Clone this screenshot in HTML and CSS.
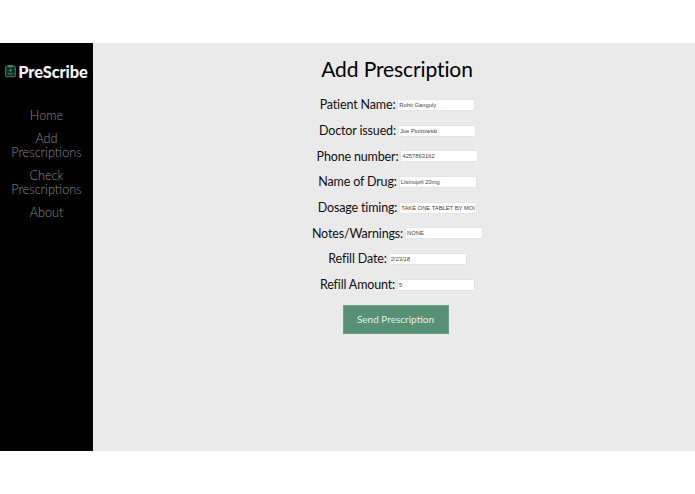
FILE: index.html
```html
<!DOCTYPE html>
<html lang="en">
<head>
<meta charset="utf-8">
<title>PreScribe</title>
<link rel="stylesheet" href="styles.css">
</head>
<body>
<div class="app">
  <aside class="sidebar">
    <div class="brand">
      <svg class="logo" viewBox="0 0 12 14" aria-hidden="true">
        <rect x="0.7" y="1.7" width="10.6" height="11.6" rx="1" fill="#12301f" stroke="#4a8a68" stroke-width="1"/>
        <rect x="3.5" y="0.5" width="5" height="2.4" fill="#4a8a68"/>
        <path d="M6 4.5v3.5M4.2 6.2h3.6M3.2 10h5.6" stroke="#4a8a68" stroke-width="1" fill="none"/>
      </svg>
      <span class="brand-name">PreScribe</span>
    </div>
    <nav class="nav">
      <a class="nav-item">Home</a>
      <a class="nav-item">Add Prescriptions</a>
      <a class="nav-item">Check Prescriptions</a>
      <a class="nav-item">About</a>
    </nav>
  </aside>
  <main class="content">
    <h1 class="title">Add Prescription</h1>
    <form class="form">
      <div class="row"><label>Patient Name:</label><input value="Rohit Ganguly"></div>
      <div class="row"><label>Doctor issued:</label><input value="Joe Piotrowski"></div>
      <div class="row"><label>Phone number:</label><input value="4257863162"></div>
      <div class="row"><label>Name of Drug:</label><input value="Lisinopril 20mg"></div>
      <div class="row"><label>Dosage timing:</label><input value="TAKE ONE TABLET BY MOUTH DAILY"></div>
      <div class="row"><label>Notes/Warnings:</label><input value="NONE"></div>
      <div class="row"><label>Refill Date:</label><input value="2/23/18"></div>
      <div class="row"><label>Refill Amount:</label><input value="5"></div>
      <button class="send" type="button">Send Prescription</button>
    </form>
  </main>
</div>
</body>
</html>
```
FILE: styles.css
```css
* { box-sizing: border-box; }
html, body { margin: 0; height: 100%; background: #fff; }
body { padding: 43px 0; font-family: "Lato", "Open Sans", sans-serif; }
.app { display: flex; height: 408px; }
.sidebar { width: 93px; flex: none; background: #000; padding-top: 20px; }
.brand { display: flex; align-items: center; justify-content: center; gap: 2px; height: 16px; }
.logo { width: 11px; height: 14px; }
.brand-name { color: #f4f4f4; font-size: 16.4px; font-weight: 900; letter-spacing: -0.1px; }
.nav { display: flex; flex-direction: column; margin-top: 24px; }
.nav-item { color: #8a8a8a; font-size: 12.7px; font-weight: 300; line-height: 14px; text-align: center; padding: 4.5px 8px; }
.content { flex: 1; background: #eaeaea; display: flex; flex-direction: column; align-items: center; padding: 12px 0 0 6px; }
.title { margin: 0; font-size: 21px; font-weight: 400; line-height: 28px; letter-spacing: -0.1px; color: #000; }
.form { display: flex; flex-direction: column; align-items: center; margin-top: 9px; }
.row { display: flex; align-items: center; justify-content: center; gap: 3px; height: 25.7px; }
.row label { font-size: 12.5px; letter-spacing: -0.15px; color: #111; }
.row input { width: 76px; height: 10px; border: 0; background: #fff; padding: 0 1px; margin: 0; font-family: "Liberation Sans", sans-serif; font-size: 5.8px; color: #444; box-shadow: 0 0 1px #ccc; }
.send { margin: 7px 3px 0 0; width: 106px; height: 29px; background: #579175; border: 1px solid #6da188; color: #e2ede7; font-family: "Lato", sans-serif; font-size: 10px; font-weight: 400; }
```
